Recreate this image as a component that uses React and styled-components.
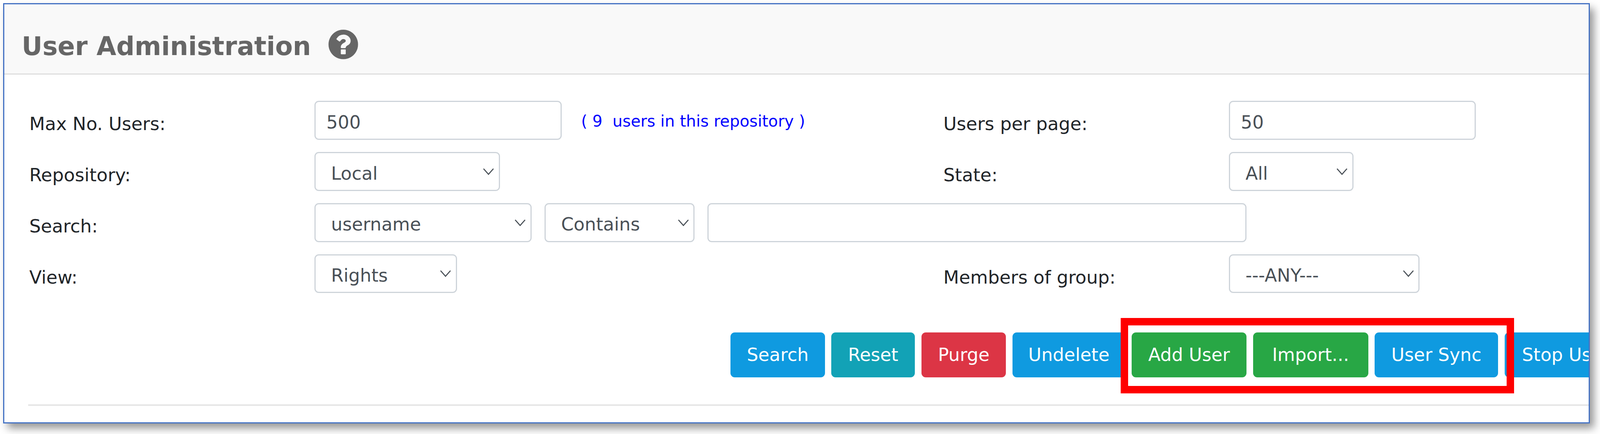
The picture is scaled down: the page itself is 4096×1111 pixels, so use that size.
import React from "react";
import styled, { createGlobalStyle } from "styled-components";

const Global = createGlobalStyle`
  html, body { margin: 0; padding: 0; background: #fff; overflow: hidden; }
  body { font-family: "DejaVu Sans", Verdana, sans-serif; }
`;

const Page = styled.div`
  zoom: 0.9217;
  width: 4444px;
  height: 1205px;
  padding: 9px 0 0 9px;
  box-sizing: border-box;
`;

const Panel = styled.section`
  width: 4407px;
  height: 1167px;
  box-sizing: border-box;
  border: 4px solid #4472c4;
  background: #fff;
  box-shadow: 12px 14px 22px rgba(0, 0, 0, 0.42);
  overflow: hidden;
  display: flex;
  flex-direction: column;
`;

const Header = styled.header`
  height: 195px;
  flex: none;
  box-sizing: border-box;
  background: #f9f9f9;
  border-bottom: 4px solid #dfdfdf;
  display: flex;
  align-items: center;
  padding: 42px 0 0 48px;
  gap: 49px;
`;

const Title = styled.h1`
  margin: 0;
  font-size: 71px;
  line-height: 1;
  font-weight: 700;
  color: #666;
`;

const HelpIcon = styled.svg`
  width: 82px;
  height: 82px;
  flex: none;
  margin-top: -11px;
`;

const Body = styled.div`
  padding: 73px 0 0 69px;
  display: flex;
  flex-direction: column;
`;

const FormGrid = styled.div`
  display: grid;
  grid-template-columns: 792px 1747px 793px 1fr;
  grid-auto-rows: 108px;
  row-gap: 34px;
`;

const Label = styled.label`
  font-size: 50.5px;
  line-height: 72px;
  padding-top: 28px;
  color: #212529;
`;

const Cell = styled.div`
  display: flex;
  align-items: center;
  gap: 36px;
  grid-column: ${(p) => p.$span || "auto"};
`;

const fieldBase = `
  box-sizing: border-box;
  height: 108px;
  border: 4px solid #ced4da;
  border-radius: 12px;
  background-color: #fff;
  color: #495057;
  font-family: "DejaVu Sans", Verdana, sans-serif;
  font-size: 50px;
  outline: none;
  margin: 0;
`;

const Input = styled.input`
  ${fieldBase}
  width: ${(p) => p.$w}px;
  padding: 10px 30px 0;
`;

const chevron = `url("data:image/svg+xml,%3Csvg xmlns='http://www.w3.org/2000/svg' width='32' height='20' viewBox='0 0 32 20'%3E%3Cpath d='M2 2 L16 18 L30 2' fill='none' stroke='%23495057' stroke-width='3'/%3E%3C/svg%3E")`;

const Select = styled.select`
  ${fieldBase}
  width: ${(p) => p.$w}px;
  appearance: none;
  padding: 10px 50px 0 43px;
  background-image: ${chevron};
  background-repeat: no-repeat;
  background-position: right 12px center;
`;

const Note = styled.span`
  font-size: 44px;
  color: #0000ff;
  white-space: pre;
  margin: 4px 0 0 18px;
`;

const ButtonRow = styled.div`
  position: relative;
  display: flex;
  gap: 18px;
  margin: 109px 0 0 1948px;
  width: max-content;
`;

const tones = {
  blue: "#0f9ae0",
  teal: "#12a2b6",
  red: "#dc3545",
  green: "#28a745",
};

const Button = styled.button`
  box-sizing: border-box;
  flex: none;
  width: ${(p) => p.$w}px;
  height: 125px;
  border: 0;
  border-radius: 12px;
  padding: 0;
  background: ${(p) => tones[p.$tone]};
  color: #fff;
  font-family: "DejaVu Sans", Verdana, sans-serif;
  font-size: 50px;
  white-space: nowrap;
`;

const Highlight = styled.div`
  position: absolute;
  left: 1083px;
  top: -40px;
  width: 1093px;
  height: 209px;
  box-sizing: border-box;
  border: 21px solid #ff0000;
  pointer-events: none;
`;

const Divider = styled.hr`
  margin: 75px 0 0 -3px;
  border: 0;
  height: 4px;
  background: #e6e6e6;
  align-self: stretch;
`;

const Opt = ({ children }) => <option>{children}</option>;

export default function App() {
  return (
    <>
      <Global />
      <Page>
        <Panel>
          <Header>
            <Title>User Administration</Title>
            <HelpIcon viewBox="128 128 1536 1536" aria-label="help">
              <path
                fill="#666"
                d="M1024 1376v-192q0-14-9-23t-23-9h-192q-14 0-23 9t-9 23v192q0 14 9 23t23 9h192q14 0 23-9t9-23zm256-672q0-88-55.5-163t-138.5-116-170-41q-243 0-371 213-15 24 8 42l132 100q7 6 19 6 16 0 25-12 53-68 86-92 34-24 86-24 48 0 85.500 26t37.500 59q0 38-20 61t-68 45q-63 28-115.500 86.500t-52.500 125.500v36q0 14 9 23t23 9h192q14 0 23-9t9-23q0-19 21.500-49.500t54.500-49.500q32-18 49-28.500t46-35 44.500-48 28-60.500 12.500-81zm384 192q0 209-103 385.500t-279.500 279.500-385.500 103-385.500-103-279.500-279.500-103-385.500 103-385.500 279.500-279.500 385.500-103 385.500 103 279.500 279.500 103 385.500z"
              />
            </HelpIcon>
          </Header>
          <Body>
            <FormGrid>
              <Label>Max No. Users:</Label>
              <Cell>
                <Input $w={687} defaultValue="500" />
                <Note>( 9  users in this repository )</Note>
              </Cell>
              <Label>Users per page:</Label>
              <Cell>
                <Input $w={686} defaultValue="50" />
              </Cell>

              <Label>Repository:</Label>
              <Cell>
                <Select $w={515}><Opt>Local</Opt></Select>
              </Cell>
              <Label>State:</Label>
              <Cell>
                <Select $w={346}><Opt>All</Opt></Select>
              </Cell>

              <Label>Search:</Label>
              <Cell $span="2 / span 3">
                <Select $w={603}><Opt>username</Opt></Select>
                <Select $w={417}><Opt>Contains</Opt></Select>
                <Input $w={1497} />
              </Cell>

              <Label>View:</Label>
              <Cell>
                <Select $w={396}><Opt>Rights</Opt></Select>
              </Cell>
              <Label>Members of group:</Label>
              <Cell>
                <Select $w={530}><Opt>---ANY---</Opt></Select>
              </Cell>
            </FormGrid>
            <ButtonRow>
              <Button $tone="blue" $w={262}>Search</Button>
              <Button $tone="teal" $w={232}>Reset</Button>
              <Button $tone="red" $w={235}>Purge</Button>
              <Button $tone="blue" $w={313}>Undelete</Button>
              <Button $tone="green" $w={319}>Add User</Button>
              <Button $tone="green" $w={320}>Import...</Button>
              <Button $tone="blue" $w={343}>User Sync</Button>
              <Button $tone="blue" $w={340}>Stop User</Button>
              <Highlight />
            </ButtonRow>
            <Divider />
          </Body>
        </Panel>
      </Page>
    </>
  );
}
